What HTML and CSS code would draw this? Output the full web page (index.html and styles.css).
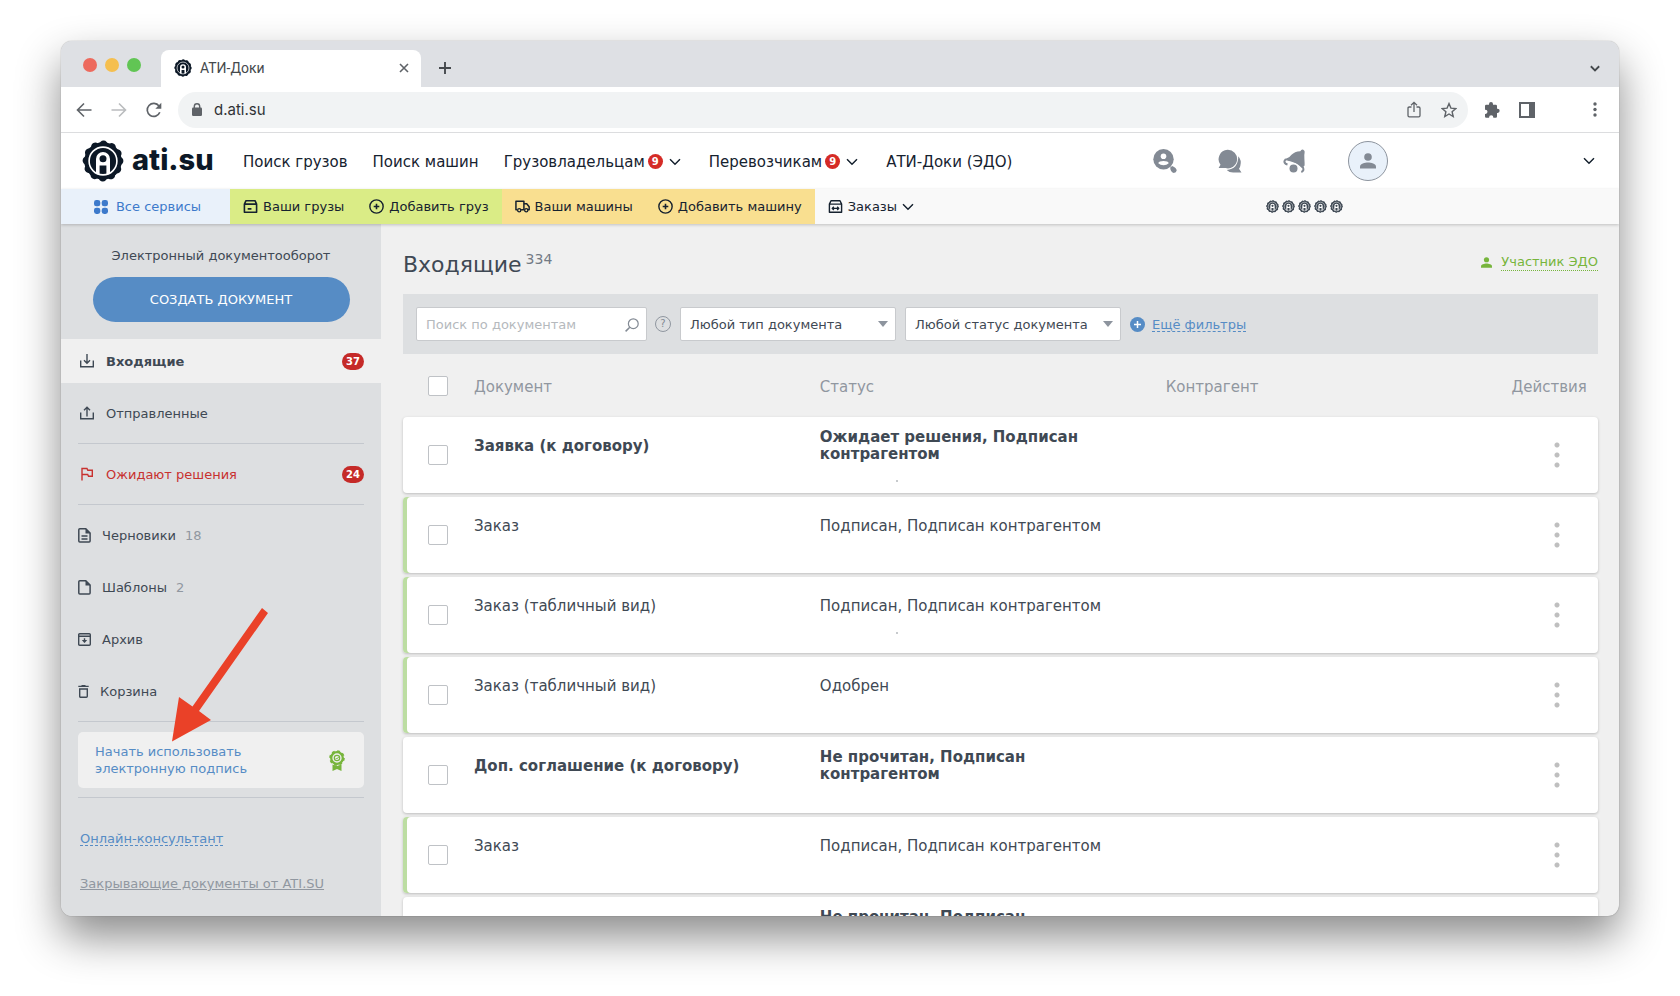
FILE: index.html
```html
<!DOCTYPE html>
<html lang="ru">
<head>
<meta charset="utf-8">
<title>АТИ-Доки</title>
<link rel="stylesheet" href="styles.css">
</head>
<body>
<svg class="sprite" aria-hidden="true">
  <symbol id="gear" viewBox="-21 -21 42 42">
    <circle r="18.7" fill="currentColor"/>
    <circle r="16.2" fill="none" stroke="currentColor" stroke-width="8.400" stroke-linecap="round" stroke-dasharray=".1 8.382"/>
    <circle r="13.900" fill="none" stroke="#fff" stroke-width="1.600"/>
    <path fill="#fff" d="M-7 12.500V-2a7 7 0 0 1 14 0V12.500Q5 13.500 3.400 13.800V4.500H-3.400V13.800Q-5 13.500-7 12.500z"/>
    <circle cy="-2.200" r="3.500" fill="currentColor"/>
  </symbol>
  <symbol id="chevron" viewBox="0 0 12 8"><path d="M1 1.300l5 5 5-5" fill="none" stroke="currentColor" stroke-width="1.500"/></symbol>
  <symbol id="box" viewBox="0 0 16 16"><path d="M1.500 5.500 3.200 1.800h9.600l1.700 3.700v8.700h-13zM1.500 5.500h13M5 10.500h4" fill="none" stroke="currentColor" stroke-width="1.700" stroke-linejoin="round"/></symbol>
  <symbol id="order" viewBox="0 0 16 16"><path d="M1.500 5.500 3.200 1.800h9.600l1.700 3.700v8.700h-13zM1.500 5.500h13M4.500 10h7M6.200 8.300 4.500 10l1.700 1.700M9.800 8.300l1.700 1.700-1.700 1.700" fill="none" stroke="currentColor" stroke-width="1.500" stroke-linejoin="round"/></symbol>
  <symbol id="plus-ring" viewBox="0 0 16 16"><circle cx="8" cy="8" r="7.100" fill="none" stroke="currentColor" stroke-width="1.500"/><path d="M8 5v6M5 8h6" stroke="currentColor" stroke-width="1.700"/></symbol>
  <symbol id="truck" viewBox="0 0 16 16"><path d="M2.500 11.500H1V2.500h8.500v9H6.500M9.500 5h3l2.600 3.200v3.300h-1.200M9.500 11.500h.8" fill="none" stroke="currentColor" stroke-width="1.600" stroke-linejoin="round"/><circle cx="4.500" cy="12" r="1.700" fill="none" stroke="currentColor" stroke-width="1.400"/><circle cx="12" cy="12" r="1.700" fill="none" stroke="currentColor" stroke-width="1.400"/></symbol>
  <symbol id="person" viewBox="0 0 16 16"><circle cx="8" cy="4" r="3.800" fill="currentColor"/><path d="M0 15.500v-2C0 10.800 5 9.500 8 9.500s8 1.300 8 4v2z" fill="currentColor"/></symbol>
</svg>

<div class="window">
  <div class="tabstrip">
    <div class="lights"><i class="light light-red"></i><i class="light light-yellow"></i><i class="light light-green"></i></div>
    <div class="tab">
      <svg class="favicon"><use href="#gear"/></svg>
      <span class="tab-title">АТИ-Доки</span>
      <button class="icon-button" aria-label="Закрыть вкладку"><svg width="10" height="10" viewBox="0 0 10 10"><path d="M1 1l8 8M9 1 1 9" stroke="currentColor" stroke-width="1.600"/></svg></button>
    </div>
    <button class="icon-button new-tab" aria-label="Новая вкладка"><svg width="14" height="14" viewBox="0 0 14 14"><path d="M7 1v12M1 7h12" stroke="currentColor" stroke-width="1.900"/></svg></button>
    <button class="icon-button tab-search" aria-label="Поиск вкладок"><svg width="10" height="7" viewBox="0 0 12 8"><path d="M1 1.300l5 5 5-5" fill="none" stroke="currentColor" stroke-width="2.200"/></svg></button>
  </div>

  <div class="toolbar">
    <button class="icon-button" aria-label="Назад"><svg width="16" height="16" viewBox="0 0 16 16"><path d="M15.500 8H2M8 1.500 1.500 8 8 14.500" fill="none" stroke="currentColor" stroke-width="1.600"/></svg></button>
    <button class="icon-button faded" aria-label="Вперёд"><svg width="16" height="16" viewBox="0 0 16 16"><path d="M.5 8H14M8 1.500 14.500 8 8 14.500" fill="none" stroke="currentColor" stroke-width="1.600"/></svg></button>
    <button class="icon-button" aria-label="Обновить"><svg width="16" height="16" viewBox="0 0 16 16"><path d="M13.800 10.300a6.500 6.500 0 1 1-.8-6.200" fill="none" stroke="currentColor" stroke-width="1.700"/><path d="M15.300.8v6H9.300z" fill="currentColor"/></svg></button>
    <div class="address">
      <svg width="10" height="13" viewBox="0 0 10 13"><rect y="4.500" width="10" height="8.500" rx="1.200" fill="currentColor"/><path d="M2.300 5V3.400a2.700 2.700 0 0 1 5.400 0V5" fill="none" stroke="currentColor" stroke-width="1.400"/></svg>
      <input class="url" type="text" value="d.ati.su" aria-label="Адрес">
      <button class="icon-button" aria-label="Поделиться"><svg width="14" height="17" viewBox="0 0 14 17"><path d="M4.500 6H2.300Q1 6 1 7.300v7.200q0 1.300 1.300 1.300h9.400q1.300 0 1.300-1.300V7.300Q13 6 11.700 6H9.500M7 11V1.500M4 4.300l3-3 3 3" fill="none" stroke="currentColor" stroke-width="1.300"/></svg></button>
      <button class="icon-button" aria-label="В закладки"><svg width="16" height="16" viewBox="0 0 16 16"><path d="M8 1.600l1.900 4.500 4.900.4-3.700 3.200 1.100 4.800L8 12l-4.200 2.500 1.100-4.800L1.200 6.500l4.900-.4z" fill="none" stroke="currentColor" stroke-width="1.400"/></svg></button>
    </div>
    <button class="icon-button puzzle" aria-label="Расширения"><svg width="16" height="16" viewBox="0 0 16 16"><path d="M1 4q0-1.300 1.300-1.300H5V2a2 2 0 0 1 4 0v.7h2.700Q13 2.700 13 4v2.800h.6a2 2 0 0 1 0 4.100H13v3.600q0 1.300-1.300 1.300H9.300v-.5a2.100 2.100 0 0 0-4.200 0v.5H2.300Q1 15.800 1 14.500v-2.600h.4a2 2 0 0 0 0-4.200H1z" fill="currentColor"/></svg></button>
    <button class="icon-button" aria-label="Боковая панель"><svg width="16" height="16" viewBox="0 0 16 16"><path d="M1 1h14v14H1z" fill="none" stroke="currentColor" stroke-width="2"/><path d="M10 1h5v14h-5z" fill="currentColor"/></svg></button>
    <button class="icon-button kebab" aria-label="Меню браузера"><svg width="4" height="15" viewBox="0 0 4 15"><g fill="currentColor"><circle cx="2" cy="2" r="1.700"/><circle cx="2" cy="7.500" r="1.700"/><circle cx="2" cy="13" r="1.700"/></g></svg></button>
  </div>

  <header class="site-header">
    <a class="logo" href="#"><svg class="logo-mark"><use href="#gear"/></svg><span>ati.su</span></a>
    <nav class="main-nav">
      <a href="#">Поиск грузов</a>
      <a href="#">Поиск машин</a>
      <a href="#">Грузовладельцам <b class="dot-badge">9</b><svg class="chev"><use href="#chevron"/></svg></a>
      <a href="#">Перевозчикам <b class="dot-badge">9</b><svg class="chev"><use href="#chevron"/></svg></a>
      <a href="#">АТИ-Доки (ЭДО)</a>
    </nav>
    <div class="user-tools">
      <button class="icon-button tool" aria-label="Поиск участников"><svg width="24" height="24" viewBox="0 0 24 24"><circle cx="10.500" cy="10.300" r="10.200" fill="currentColor"/><circle cx="10.500" cy="7.200" r="2.800" fill="#fff"/><path d="M5.300 14.300c0-3 10.400-3 10.400 0-2.500 2.600-7.900 2.600-10.400 0z" fill="#fff"/><path d="M17.200 18.600l2-1.700q4.300 1.600 4.500 4.700-.4 2.400-3 2.400-3.400-1-3.500-5.400z" fill="currentColor"/></svg></button>
      <button class="icon-button tool" aria-label="Сообщения"><svg width="24" height="24" viewBox="0 0 24 24"><path d="M9.500.8a9.300 9.300 0 1 1-2 18.300H.6l1.900-3.400A9.300 9.300 0 0 1 9.500.8z" fill="currentColor"/><path d="M20.300 7.300q3.600 4 2 9.600-.4 1.700-1.300 2.900l2.500 3.600h-7.800q-4.300.2-7-2.500 11.400-.4 11.600-13.600z" fill="currentColor"/></svg></button>
      <button class="icon-button tool" aria-label="Уведомления"><svg width="24" height="24" viewBox="0 0 24 24"><path d="M17.300 2.200Q18.500 0 20.300.8q1.900.9 1.300 3-.5 1.600-.2 6.200.3 4 .2 6.500L19 19Q14 13.300 4.300 11.500L4 9.300Q6.500 8.500 8.500 5.800 11.500 2.500 17.300 2.200z" fill="currentColor"/><path d="M4.500 15.500Q1 14.500 1.500 12q.5-1.800 3-1.700Q15 11.500 20 18.500q1.300 3.500-1.700 4.500" fill="none" stroke="currentColor" stroke-width="2"/><circle cx="10.500" cy="19.300" r="5.200" fill="#fff"/><circle cx="10.500" cy="19.500" r="4" fill="currentColor"/></svg></button>
      <button class="avatar" aria-label="Профиль"><svg width="16" height="16"><use href="#person"/></svg></button>
    </div>
    <button class="icon-button expand" aria-label="Развернуть"><svg class="chev"><use href="#chevron"/></svg></button>
  </header>

  <nav class="services">
    <a class="all-services" href="#"><svg width="14" height="14" viewBox="0 0 14 14"><g fill="currentColor"><rect width="6.300" height="6.300" rx="2.400"/><rect x="7.700" width="6.300" height="6.300" rx="2.400"/><rect y="7.700" width="6.300" height="6.300" rx="2.400"/><rect x="7.700" y="7.700" width="6.300" height="6.300" rx="2.400"/></g></svg>Все сервисы</a>
    <div class="group green">
      <a href="#"><svg class="ic"><use href="#box"/></svg>Ваши грузы</a>
      <a href="#"><svg class="ic"><use href="#plus-ring"/></svg>Добавить груз</a>
    </div>
    <div class="group yellow">
      <a href="#"><svg class="ic"><use href="#truck"/></svg>Ваши машины</a>
      <a href="#"><svg class="ic"><use href="#plus-ring"/></svg>Добавить машину</a>
    </div>
    <div class="group">
      <a href="#"><svg class="ic"><use href="#order"/></svg>Заказы <svg class="chev"><use href="#chevron"/></svg></a>
    </div>
    <div class="rating" role="img" aria-label="Рейтинг 5">
      <svg><use href="#gear"/></svg><svg><use href="#gear"/></svg><svg><use href="#gear"/></svg><svg><use href="#gear"/></svg><svg><use href="#gear"/></svg>
    </div>
  </nav>

  <div class="page">
    <aside class="sidebar">
      <p class="caption">Электронный документооборот</p>
      <button class="create">СОЗДАТЬ ДОКУМЕНТ</button>
      <nav class="folders">
        <a class="folder active" href="#"><svg width="14" height="14" viewBox="0 0 14 14"><path d="M.7 6.500v6.300h12.600V6.500M7 0v9M4 6.300l3 3 3-3" fill="none" stroke="currentColor" stroke-width="1.400"/></svg><span>Входящие</span><b class="count">37</b></a>
        <a class="folder" href="#"><svg width="14" height="14" viewBox="0 0 14 14"><path d="M.7 6.500v6.300h12.600V6.500M7 10.500V1.300M4 4.200l3-3 3 3" fill="none" stroke="currentColor" stroke-width="1.400"/></svg><span>Отправленные</span></a>
        <hr>
        <a class="folder alert" href="#"><svg width="14" height="14" viewBox="0 0 14 14"><path d="M2 13.500V1.500h5l.8 1.700h4.500v6H8.500L7.700 7.500H2" fill="none" stroke="currentColor" stroke-width="1.400"/></svg><span>Ожидают решения</span><b class="count">24</b></a>
        <hr>
        <a class="folder plain" href="#"><svg width="13" height="15" viewBox="0 0 13 15"><path d="M1.800.8h6l4.300 4.300v8q0 1-1 1H1.800q-1 0-1-1V1.800q0-1 1-1zM3.500 8h6M3.500 11h6" fill="none" stroke="currentColor" stroke-width="1.500"/><path d="M7.500.8v4.600h4.600z" fill="currentColor"/></svg><span>Черновики</span><small>18</small></a>
        <a class="folder plain" href="#"><svg width="13" height="15" viewBox="0 0 13 15"><path d="M1.800.8h6l4.300 4.300v8q0 1-1 1H1.800q-1 0-1-1V1.800q0-1 1-1z" fill="none" stroke="currentColor" stroke-width="1.500"/><path d="M7.500.8v4.600h4.600z" fill="currentColor"/></svg><span>Шаблоны</span><small>2</small></a>
        <a class="folder plain" href="#"><svg width="13" height="13" viewBox="0 0 13 13"><path d="M.7 1.700q0-1 1-1h9.600q1 0 1 1v9.600q0 1-1 1H1.700q-1 0-1-1zM.7 3.200h11.600M6.500 5.300v4" fill="none" stroke="currentColor" stroke-width="1.400"/><path d="M3.800 7h5.400L6.500 9.900z" fill="currentColor"/></svg><span>Архив</span></a>
        <a class="folder plain trash" href="#"><svg width="11" height="13" viewBox="0 0 11 13"><path d="M.3 1.400h10.400M3.500.7h4M1.700 4h7.600v7.200q0 1.100-1 1.100H2.700q-1 0-1-1.100z" fill="none" stroke="currentColor" stroke-width="1.400"/></svg><span>Корзина</span></a>
        <hr>
        <a class="promo" href="#">
          <span>Начать использовать электронную подпись</span>
          <svg width="16" height="21" viewBox="0 0 16 21"><circle cx="8" cy="8" r="5.800" fill="none" stroke="currentColor" stroke-width="2.300"/><circle cx="8" cy="8" r="6.900" fill="none" stroke="currentColor" stroke-width="1.800" stroke-dasharray="2.800 2.619"/><circle cx="8" cy="8" r="2.700" fill="none" stroke="currentColor" stroke-width="1.200"/><path d="M6.700 8l1 1 2-2" fill="none" stroke="currentColor" stroke-width="1"/><path d="M3.500 14.500 8 16l4.500-1.500V21L8 19l-4.500 2z" fill="currentColor"/></svg>
          <svg class="pointer" width="96" height="136" viewBox="0 0 96 136"><path d="M90 1 96 6 27 104 39 113 0 134.500 7 90 20.500 99.500z" fill="#ea4128"/></svg>
        </a>
        <hr>
      </nav>
      <div class="side-links">
        <a class="consult" href="#">Онлайн-консультант</a>
        <a class="closing" href="#">Закрывающие документы от ATI.SU</a>
      </div>
    </aside>

    <main class="content">
      <div class="heading">
        <h1>Входящие<sup>334</sup></h1>
        <div class="member"><svg width="11" height="11"><use href="#person"/></svg><a href="#">Участник ЭДО</a></div>
      </div>
      <form class="filters">
        <div class="search"><input type="text" placeholder="Поиск по документам" aria-label="Поиск по документам"><svg width="14" height="14" viewBox="0 0 14 14"><circle cx="8.300" cy="5.700" r="4.900" fill="none" stroke="currentColor" stroke-width="1.200"/><path d="M4.800 9.200.6 13.400" stroke="currentColor" stroke-width="1.500"/></svg></div>
        <button class="help" type="button">?</button>
        <select aria-label="Тип документа"><option>Любой тип документа</option></select>
        <select aria-label="Статус документа"><option>Любой статус документа</option></select>
        <a class="more" href="#"><svg width="15" height="15" viewBox="0 0 15 15"><circle cx="7.500" cy="7.500" r="7.500" fill="currentColor"/><path d="M7.500 4v7M4 7.500h7" stroke="#fff" stroke-width="1.500"/></svg><span>Ещё фильтры</span></a>
      </form>
      <table class="docs">
        <thead>
          <tr><th class="pick"><input type="checkbox" aria-label="Выбрать все"></th><th>Документ</th><th>Статус</th><th>Контрагент</th><th>Действия</th></tr>
        </thead>
        <tbody>
          <tr class="unread speck"><td class="pick"><input type="checkbox" aria-label="Выбрать"></td><td>Заявка (к договору)</td><td class="status two">Ожидает решения, Подписан контрагентом</td><td></td><td class="act"><button class="dots" aria-label="Действия"></button></td></tr>
          <tr class="signed"><td class="pick"><input type="checkbox" aria-label="Выбрать"></td><td>Заказ</td><td class="status">Подписан, Подписан контрагентом</td><td></td><td class="act"><button class="dots" aria-label="Действия"></button></td></tr>
          <tr class="signed speck"><td class="pick"><input type="checkbox" aria-label="Выбрать"></td><td>Заказ (табличный вид)</td><td class="status">Подписан, Подписан контрагентом</td><td></td><td class="act"><button class="dots" aria-label="Действия"></button></td></tr>
          <tr class="signed"><td class="pick"><input type="checkbox" aria-label="Выбрать"></td><td>Заказ (табличный вид)</td><td class="status">Одобрен</td><td></td><td class="act"><button class="dots" aria-label="Действия"></button></td></tr>
          <tr class="unread"><td class="pick"><input type="checkbox" aria-label="Выбрать"></td><td>Доп. соглашение (к договору)</td><td class="status two">Не прочитан, Подписан контрагентом</td><td></td><td class="act"><button class="dots" aria-label="Действия"></button></td></tr>
          <tr class="signed"><td class="pick"><input type="checkbox" aria-label="Выбрать"></td><td>Заказ</td><td class="status">Подписан, Подписан контрагентом</td><td></td><td class="act"><button class="dots" aria-label="Действия"></button></td></tr>
          <tr class="unread"><td class="pick"><input type="checkbox" aria-label="Выбрать"></td><td></td><td class="status two">Не прочитан, Подписан контрагентом</td><td></td><td class="act"><button class="dots" aria-label="Действия"></button></td></tr>
        </tbody>
      </table>
    </main>
  </div>
</div>
</body>
</html>
```
FILE: styles.css
```css
* { box-sizing: border-box; }
body {
  margin: 0;
  padding: 41px 61px 80px;
  height: 100vh;
  overflow: hidden;
  background: #fff;
  font: 13px/17px Verdana, "DejaVu Sans", sans-serif;
  color: #3f4954;
}
a { color: inherit; text-decoration: none; }
button { font: inherit; color: inherit; border: 0; background: none; padding: 0; }
svg { display: block; flex: none; }
.sprite { position: absolute; width: 0; height: 0; }
.icon-button { display: flex; align-items: center; justify-content: center; color: #5f6368; }

.window {
  display: flex;
  flex-direction: column;
  height: 100%;
  border-radius: 11px;
  overflow: hidden;
  background: #f0f0f0;
  box-shadow: 0 0 1px rgba(0, 0, 0, .5), 0 21px 44px rgba(0, 0, 0, .46);
}

/* browser frame */
.tabstrip { display: flex; flex: none; height: 46px; padding-right: 19px; background: #dee0e4; }
.lights { display: flex; gap: 8px; padding: 17px 20px 0 22px; }
.light { width: 14px; height: 14px; border-radius: 50%; }
.light-red { background: #ed6a5e; }
.light-yellow { background: #f5bf4f; }
.light-green { background: #61c554; }
.tab {
  display: flex;
  align-items: center;
  width: 260px;
  margin-top: 9px;
  padding: 0 12px 2px 13px;
  border-radius: 8px 8px 0 0;
  background: #fff;
  font: 14px/18px Roboto, sans-serif;
  color: #45494d;
}
.favicon { width: 18px; height: 18px; color: #0c1826; }
.tab-title { flex: 1; margin-left: 8px; }
.new-tab { margin: 7px 0 0 17px; color: #45494d; }
.tab-search { margin: 9px 0 0 auto; color: #45494d; }
.toolbar {
  display: flex;
  flex: none;
  align-items: center;
  gap: 19px;
  height: 46px;
  padding: 0 22px 0 15px;
  border-bottom: 1px solid #dcdddf;
  background: #fff;
}
.faded { color: #babcbe; }
.address {
  display: flex;
  flex: 1;
  align-items: center;
  gap: 12px;
  height: 36px;
  margin-left: -3px;
  padding: 0 11px 0 14px;
  border-radius: 18px;
  background: #f1f3f4;
  color: #5f6368;
}
.address .icon-button + .icon-button { margin-left: 8px; }
.url { flex: 1; min-width: 0; border: 0; padding: 0; background: none; font: 15px/20px Inter, sans-serif; color: #303236; }
.puzzle { margin-left: -3px; }
.kebab { margin-left: 39px; }

/* site header */
.site-header { display: flex; flex: none; align-items: center; height: 56px; padding: 0 24px 0 21px; background: #fff; color: #16222f; }
.logo { display: flex; align-items: center; gap: 8px; width: 161px; font: 800 29px/34px Inter, sans-serif; color: #0c1826; }
.logo span { padding-bottom: 3px; }
.logo-mark { width: 42px; height: 42px; }
.main-nav { display: flex; gap: 25px; padding-top: 2px; font-size: 15px; white-space: nowrap; }
.main-nav a { display: flex; align-items: center; }
.main-nav .chev { margin-right: 3px; }
.dot-badge {
  width: 15px;
  height: 15px;
  margin: 0 6px 2px 3px;
  border-radius: 50%;
  background: #d52b26;
  color: #fff;
  font-size: 10px;
  line-height: 15px;
  text-align: center;
}
.chev { width: 12px; height: 8px; color: #16222f; }
.user-tools { display: flex; align-items: center; gap: 41px; margin-left: auto; }
.tool { color: #838a94; }
.avatar {
  display: flex;
  align-items: center;
  justify-content: center;
  width: 40px;
  height: 40px;
  border: 1px solid #8d949e;
  border-radius: 50%;
  background: #e9f1fa;
  color: #838a94;
}
.expand { margin-left: 195px; }

.services {
  display: flex;
  flex: none;
  height: 35px;
  background: #f9f9f9;
  color: #16222f;
  white-space: nowrap;
  box-shadow: 0 1px 3px rgba(0, 0, 0, .2);
  z-index: 1;
}
.services a { display: flex; align-items: center; gap: 5px; }
.services .all-services { justify-content: center; gap: 8px; width: 169px; padding-left: 4px; background: #e9f1fa; color: #3d7acb; }
.group { display: flex; gap: 25px; padding: 0 13px; }
.green { background: #daec86; }
.yellow { background: #f9df90; }
.ic { width: 15px; height: 15px; }
.rating { display: flex; align-items: center; gap: 3px; margin-left: auto; margin-right: 276px; color: #3f4954; }
.rating svg { width: 13px; height: 13px; }

/* sidebar */
.page { display: grid; flex: 1; grid-template-columns: 320px minmax(0, 1fr); min-height: 0; }
.sidebar { background: #dddfe1; }
.caption { margin: 0; padding-top: 23px; text-align: center; }
.create {
  display: block;
  width: 257px;
  height: 45px;
  margin: 13px auto 17px;
  border-radius: 23px;
  background: #568cc5;
  color: #fff;
}
.folders { display: flex; flex-direction: column; gap: 8px; }
.folders hr { width: auto; height: 1px; margin: 0 17px; border: 0; background: #c4c8ce; }
.folder { display: flex; align-items: center; gap: 12px; height: 44px; padding: 0 17px 0 19px; }
.folder.plain { gap: 11px; padding-left: 17px; }
.folder small { margin-left: -2px; font-size: 13px; color: #9097a0; }
.active { background: #f0f0f0; font-weight: bold; }
.alert { color: #c8312f; }
.count {
  width: 22px;
  height: 17px;
  margin-left: auto;
  border-radius: 9px;
  background: #c52a28;
  color: #fff;
  font-size: 10px;
  text-align: center;
}
.promo {
  position: relative;
  display: flex;
  align-items: center;
  justify-content: space-between;
  height: 56px;
  margin: 2px 17px 1px;
  padding: 0 19px 0 17px;
  border-radius: 5px;
  background: #f0f0f0;
  color: #568cc5;
}
.promo span { width: 160px; }
.promo svg { color: #77b53c; }
.promo .pointer { position: absolute; left: 94px; top: -125px; }
.side-links { display: flex; flex-direction: column; align-items: flex-start; gap: 28px; padding: 32px 19px 0; }
.consult { color: #568cc5; text-decoration: underline dashed 1px; text-underline-offset: 2px; }
.closing { color: #9097a0; text-decoration: underline; }

/* documents */
.content { padding: 24px 21px 0 22px; overflow: hidden; }
.heading { display: flex; justify-content: space-between; height: 46px; }
h1 { margin: 0; font-size: 22px; line-height: 34px; font-weight: normal; }
sup { margin-left: 4px; font-size: 14px; line-height: 0; color: #737b85; }
.member { display: flex; align-items: center; gap: 9px; height: 28px; color: #77b53c; }
.member a { border-bottom: 1px dotted #77b53c; }
.filters { display: flex; align-items: center; height: 60px; padding: 0 13px; background: #dddfe1; }
.search { position: relative; width: 231px; }
.search input, .filters select {
  width: 100%;
  height: 34px;
  padding: 0 9px;
  border: 1px solid #c8cacd;
  border-radius: 2px;
  background: #fff;
  font: inherit;
  color: #3f4954;
}
.search input::placeholder { color: #b5b9bd; opacity: 1; }
.search svg { position: absolute; right: 8px; top: 11px; color: #838a94; }
.help { width: 16px; height: 16px; margin: 0 9px 0 8px; border: 1px solid #9097a0; border-radius: 50%; font-size: 10px; line-height: 14px; color: #838a94; }
.filters select {
  width: 216px;
  margin-right: 9px;
  appearance: none;
  background: #fff url("data:image/svg+xml,%3Csvg xmlns='http://www.w3.org/2000/svg' width='10' height='6'%3E%3Cpath d='M0 0h10L5 6z' fill='%238d949e'/%3E%3C/svg%3E") no-repeat right 7px center;
}
.more { display: flex; align-items: center; gap: 7px; color: #568cc5; text-decoration: underline dashed 1px; text-underline-offset: 2px; }

.docs { display: block; font-size: 15px; }
.docs thead, .docs tbody { display: block; }
.docs tr { display: grid; grid-template-columns: 71px 4fr 4fr 4fr 1fr; }
.docs th { padding: 25px 0 21px; text-align: left; font-weight: normal; color: #9097a0; }
.docs td { min-width: 0; padding: 21px 0 0; }
.docs tbody { display: flex; flex-direction: column; gap: 4px; }
.docs tbody tr { position: relative; height: 76px; border-radius: 4px; background: #fff; box-shadow: 0 1px 3px rgba(0, 0, 0, .22); }
.docs .signed { box-shadow: inset 4px 0 #bcdda2, 0 1px 3px rgba(0, 0, 0, .22); }
.unread { font-weight: bold; }
.status { max-width: 300px; }
.docs .two { padding-top: 12px; }
.docs .pick, .docs .act { display: flex; align-items: center; padding: 0; }
.pick input { appearance: none; width: 20px; height: 20px; margin: 0 0 0 25px; border: 1px solid #bfc2c6; border-radius: 2px; background: #fff; }
.docs .act { justify-content: center; padding-left: 5px; }
.dots { width: 6px; height: 26px; background: radial-gradient(circle, #bfbfbf 2px, transparent 3px) 0 -2px / 6px 10px; }
.speck::after { content: ""; position: absolute; left: 493px; bottom: 11px; width: 2px; height: 2px; border-radius: 1px; background: #b5b9bd; }
.signed.speck::after { bottom: 19px; }
```
